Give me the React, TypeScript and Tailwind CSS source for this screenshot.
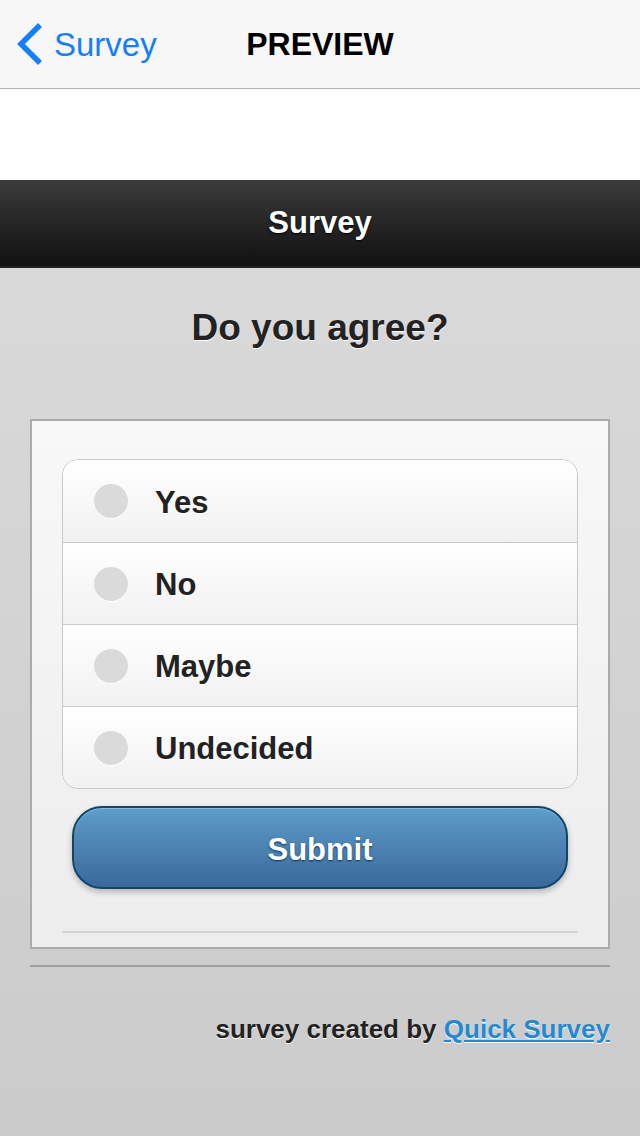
import React, { useState } from 'react';

const options = ['Yes', 'No', 'Maybe', 'Undecided'];

export default function App() {
  const [selected, setSelected] = useState<string | null>(null);

  return (
    <div className="flex min-h-[1136px] w-full flex-col font-['Liberation_Sans',Arial,sans-serif]">
      {/* iOS nav bar */}
      <div className="relative flex h-[89px] shrink-0 items-center border-b border-[#b2b2b2] bg-[#f7f7f7]">
        <div className="flex items-center pl-[15px] text-[#157efb]">
          <svg width="28" height="44" viewBox="0 0 28 44" fill="none">
            <path d="M25 3 L6 22 L25 41" stroke="#157efb" strokeWidth="5.5" strokeLinecap="butt" strokeLinejoin="miter" />
          </svg>
          <span className="ml-[11px] text-[33px] leading-none">Survey</span>
        </div>
        <div className="absolute inset-x-0 text-center text-[32px] font-bold leading-none text-black pointer-events-none">
          PREVIEW
        </div>
      </div>

      <div className="h-[91px] shrink-0 bg-white" />

      {/* Survey header */}
      <div className="flex h-[88px] shrink-0 items-center justify-center border-b-2 border-[#222] bg-gradient-to-b from-[#3c3c3c] to-[#111]">
        <h1 className="text-[31px] font-bold text-white [text-shadow:0_1px_2px_#000]">Survey</h1>
      </div>

      {/* Body */}
      <div className="flex flex-1 flex-col bg-gradient-to-b from-[#d9d9d9] to-[#cbcbcb] pb-[60px]">
        <h2 className="mt-[38px] mb-[69px] text-center text-[37px] font-bold leading-[44px] text-[#222] [text-shadow:0_1px_0_#fff]">
          Do you agree?
        </h2>

        <div className="mx-[30px] border-2 border-[#ababab] bg-gradient-to-b from-[#f8f8f8] to-[#ededed] px-[30px] pt-[38px]">
          <div className="overflow-hidden rounded-[16px] border border-[#c8c8c8]">
            {options.map((opt, i) => (
              <button
                key={opt}
                onClick={() => setSelected(opt)}
                className={`flex h-[82px] w-full items-center bg-gradient-to-b from-white to-[#f1f1f1] pl-[31px] text-left ${i > 0 ? 'border-t border-[#c8c8c8]' : ''}`}
              >
                <span className="flex h-[34px] w-[34px] items-center justify-center rounded-full bg-[#dadada] shadow-[0_1px_0_#fff]">
                  {selected === opt && <span className="h-[14px] w-[14px] rounded-full bg-[#3a6a9c]" />}
                </span>
                <span className="ml-[27px] pt-[4px] text-[31px] font-bold text-[#222] [text-shadow:0_1px_0_#fff]">{opt}</span>
              </button>
            ))}
          </div>

          <div className="px-[10px] pt-[17px]">
            <button className="flex h-[83px] w-full items-center justify-center rounded-[30px] border-2 border-[#124567] bg-gradient-to-b from-[#5e9dca] to-[#3a699b] pt-[6px] text-[31px] font-bold text-white shadow-[0_3px_6px_rgba(0,0,0,0.25),inset_0_1px_0_rgba(255,255,255,0.3)] [text-shadow:0_1px_2px_#0b3658]">
              Submit
            </button>
          </div>

          <div className="mt-[42px] mb-[14px] h-[2px] bg-[#d2d2d2]" />
        </div>

        <div className="mx-[30px] mt-[16px] h-[2px] bg-[#9f9f9f]" />

        <p className="mt-[46px] pr-[30px] text-right text-[26px] font-bold leading-[32px] text-[#222] [text-shadow:0_1px_0_#fff]">
          survey created by{' '}
          <a href="#" className="text-[#2489ce] underline">
            Quick Survey
          </a>
        </p>
      </div>
    </div>
  );
}
